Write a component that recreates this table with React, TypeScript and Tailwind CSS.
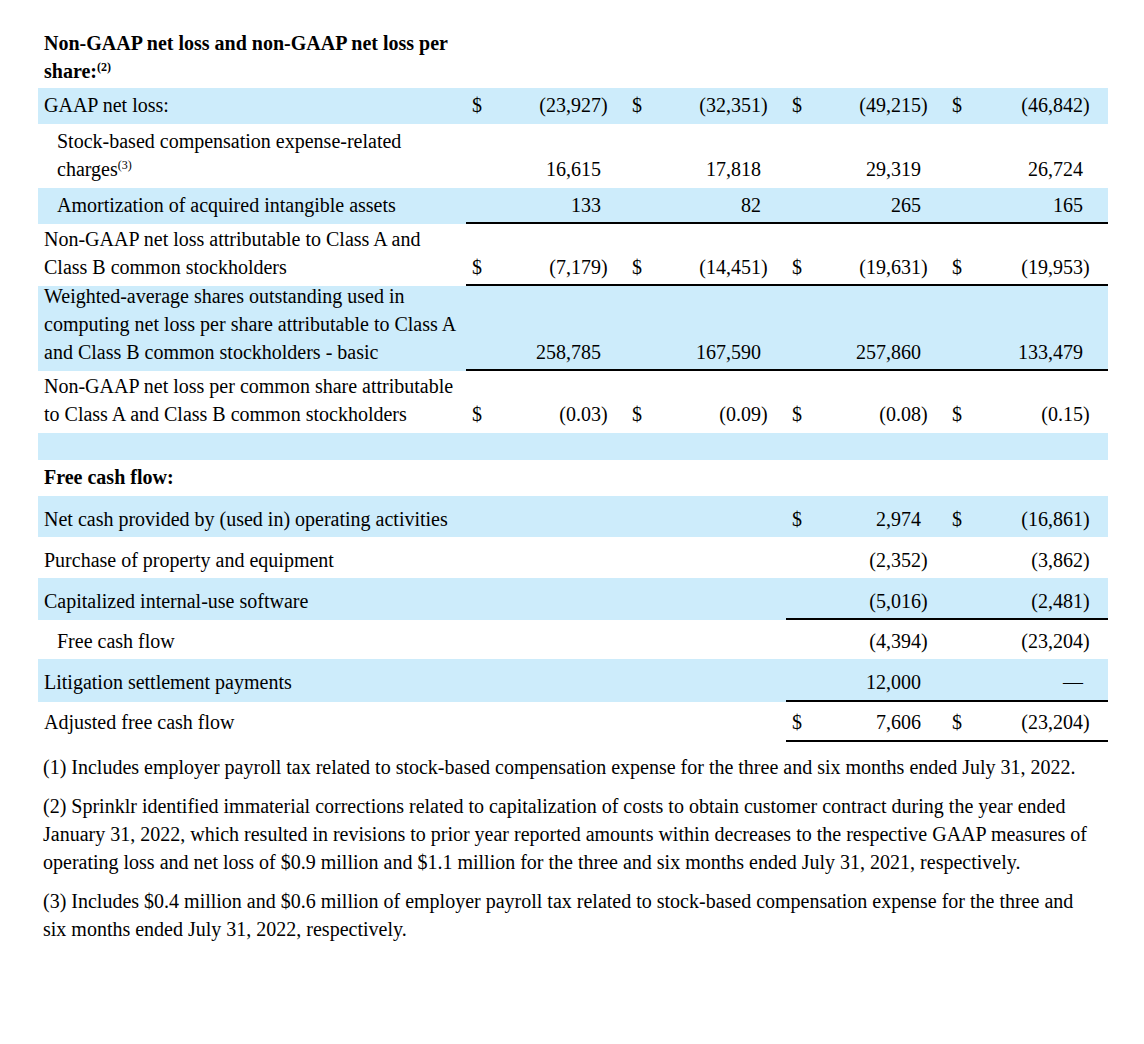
import React from "react";

type Cell = { d?: boolean; v?: string; neg?: boolean } | null;

const GW = ["w-[160px]", "w-[160px]", "w-[160px]", "w-[162px]"];

function Group({ cell, w }: { cell: Cell; w: string }) {
  return (
    <div className={`${w} flex items-end`}>
      <span className="w-[20px] pl-[6px]">{cell?.d ? "$" : ""}</span>
      <span className="flex-1 text-right whitespace-nowrap">{cell?.v ?? ""}</span>
      <span className="w-[25px]">{cell?.neg ? ")" : ""}</span>
    </div>
  );
}

type RowProps = {
  label: React.ReactNode;
  h: string;
  lpb: string;
  vpb: string;
  blue?: boolean;
  cells: Cell[];
  border?: 0 | 1 | 2;
  indent?: boolean;
  bold?: boolean;
};

function Row({ label, h, lpb, vpb, blue, cells, border = 0, indent, bold }: RowProps) {
  return (
    <div className={`flex ${h} ${blue ? "bg-[#cdecfb]" : ""}`}>
      <div
        className={`w-[428px] flex items-end whitespace-nowrap ${indent ? "pl-[19px]" : "pl-[6px]"} ${lpb} ${
          bold ? "font-bold" : ""
        }`}
      >
        <div>{label}</div>
      </div>
      {border === 2 ? (
        <>
          <div className={`flex w-[320px] ${vpb}`}>
            <Group cell={cells[0]} w={GW[0]} />
            <Group cell={cells[1]} w={GW[1]} />
          </div>
          <div className={`flex w-[322px] border-b-2 border-black ${vpb}`}>
            <Group cell={cells[2]} w={GW[2]} />
            <Group cell={cells[3]} w={GW[3]} />
          </div>
        </>
      ) : (
        <div className={`flex w-[642px] ${border === 1 ? "border-b-2 border-black" : ""} ${vpb}`}>
          {cells.map((c, i) => (
            <Group key={i} cell={c} w={GW[i]} />
          ))}
        </div>
      )}
    </div>
  );
}

const n = (v: string, d = false): Cell => ({ v, d });
const ng = (v: string, d = false): Cell => ({ v: "(" + v, d, neg: true });

export default function App() {
  return (
    <div
      className="w-[1144px] min-h-[1044px] bg-white text-black text-[20px] leading-[28px] pl-[38px]"
      style={{ fontFamily: '"Liberation Serif", "Times New Roman", serif' }}
    >
      <div className="w-[1070px]">
        <div className="h-[88px] pt-[29px] pl-[6px] w-[428px] font-bold whitespace-nowrap">
          Non-GAAP net loss and non-GAAP net loss per
          <br />
          share:<sup className="text-[12px] top-[-7px]">(2)</sup>
        </div>

        <Row
          label="GAAP net loss:"
          h="h-[36px]"
          lpb="pb-[5px]"
          vpb="pb-[5px]"
          blue
          cells={[ng("23,927", true), ng("32,351", true), ng("49,215", true), ng("46,842", true)]}
        />
        <Row
          label={
            <>
              Stock-based compensation expense-related
              <br />
              charges<sup className="text-[12px] top-[-7px]">(3)</sup>
            </>
          }
          indent
          h="h-[64px]"
          lpb="pb-[5px]"
          vpb="pb-[5px]"
          cells={[n("16,615"), n("17,818"), n("29,319"), n("26,724")]}
        />
        <Row
          label="Amortization of acquired intangible assets"
          indent
          h="h-[36px]"
          lpb="pb-[5px]"
          vpb="pb-[3px]"
          blue
          border={1}
          cells={[n("133"), n("82"), n("265"), n("165")]}
        />
        <Row
          label={
            <>
              Non-GAAP net loss attributable to Class A and
              <br />
              Class B common stockholders
            </>
          }
          h="h-[62px]"
          lpb="pb-[5px]"
          vpb="pb-[3px]"
          border={1}
          cells={[ng("7,179", true), ng("14,451", true), ng("19,631", true), ng("19,953", true)]}
        />
        <Row
          label={
            <>
              Weighted-average shares outstanding used in
              <br />
              computing net loss per share attributable to Class A
              <br />
              and Class B common stockholders - basic
            </>
          }
          h="h-[85px]"
          lpb="pb-[5px]"
          vpb="pb-[3px]"
          blue
          border={1}
          cells={[n("258,785"), n("167,590"), n("257,860"), n("133,479")]}
        />
        <Row
          label={
            <>
              Non-GAAP net loss per common share attributable
              <br />
              to Class A and Class B common stockholders
            </>
          }
          h="h-[62px]"
          lpb="pb-[5px]"
          vpb="pb-[5px]"
          cells={[ng("0.03", true), ng("0.09", true), ng("0.08", true), ng("0.15", true)]}
        />
        <Row label="" h="h-[27px]" lpb="" vpb="" blue cells={[null, null, null, null]} />
        <Row
          label="Free cash flow:"
          bold
          h="h-[36px]"
          lpb="pb-[5px]"
          vpb="pb-[5px]"
          cells={[null, null, null, null]}
        />
        <Row
          label="Net cash provided by (used in) operating activities"
          h="h-[41px]"
          lpb="pb-[4px]"
          vpb="pb-[4px]"
          blue
          cells={[null, null, n("2,974", true), ng("16,861", true)]}
        />
        <Row
          label="Purchase of property and equipment"
          h="h-[41px]"
          lpb="pb-[4px]"
          vpb="pb-[4px]"
          cells={[null, null, ng("2,352"), ng("3,862")]}
        />
        <Row
          label="Capitalized internal-use software"
          h="h-[42px]"
          lpb="pb-[5px]"
          vpb="pb-[3px]"
          blue
          border={2}
          cells={[null, null, ng("5,016"), ng("2,481")]}
        />
        <Row
          label="Free cash flow"
          indent
          h="h-[39px]"
          lpb="pb-[4px]"
          vpb="pb-[4px]"
          cells={[null, null, ng("4,394"), ng("23,204")]}
        />
        <Row
          label="Litigation settlement payments"
          h="h-[43px]"
          lpb="pb-[6px]"
          vpb="pb-[4px]"
          blue
          border={2}
          cells={[null, null, n("12,000"), n("—")]}
        />
        <Row
          label="Adjusted free cash flow"
          h="h-[40px]"
          lpb="pb-[6px]"
          vpb="pb-[4px]"
          border={2}
          cells={[null, null, n("7,606", true), ng("23,204", true)]}
        />

        <div className="pl-[5px] whitespace-nowrap">
          <p className="mt-[11px]">
            (1) Includes employer payroll tax related to stock-based compensation expense for the three and six months
            ended July 31, 2022.
          </p>
          <p className="mt-[11px]">
            (2) Sprinklr identified immaterial corrections related to capitalization of costs to obtain customer contract
            during the year ended
            <br />
            January 31, 2022, which resulted in revisions to prior year reported amounts within decreases to the
            respective GAAP measures of
            <br />
            operating loss and net loss of $0.9 million and $1.1 million for the three and six months ended July 31,
            2021, respectively.
          </p>
          <p className="mt-[11px]">
            (3) Includes $0.4 million and $0.6 million of employer payroll tax related to stock-based compensation
            expense for the three and
            <br />
            six months ended July 31, 2022, respectively.
          </p>
        </div>
      </div>
    </div>
  );
}
